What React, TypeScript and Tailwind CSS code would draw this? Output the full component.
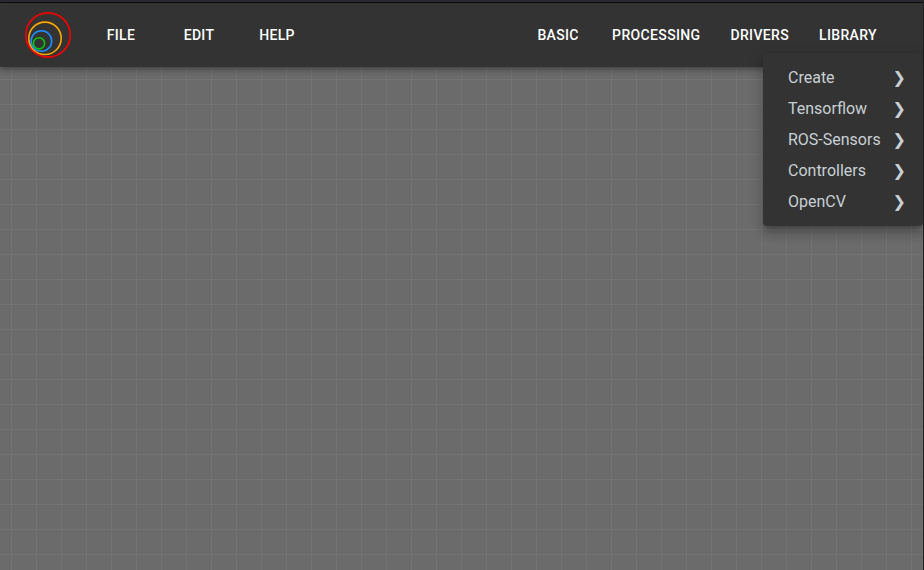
import React from "react";

const fileMenus = ["File", "Edit", "Help"];
const blockMenus = ["Basic", "Processing", "Drivers", "Library"];
const libraryItems = ["Create", "Tensorflow", "ROS-Sensors", "Controllers", "OpenCV"];

function MenuButton({ label }: { label: string }) {
  return (
    <button
      type="button"
      className="min-w-16 px-2 py-1.5 text-center text-sm font-medium uppercase leading-6 tracking-wide text-white"
    >
      {label}
    </button>
  );
}

function Logo() {
  return (
    <svg className="h-12 w-12" viewBox="0 0 48 48" fill="none" role="img" aria-label="Logo">
      <circle cx="24" cy="24" r="22.2" stroke="#f50000" strokeWidth="1.7" />
      <circle cx="21" cy="27.3" r="16.2" stroke="#ffa500" strokeWidth="1.6" />
      <circle cx="17.4" cy="30" r="10.3" stroke="#1e90ff" strokeWidth="1.6" />
      <circle cx="15" cy="32.3" r="5.6" stroke="#0bc40b" strokeWidth="1.6" />
    </svg>
  );
}

function LibraryMenu() {
  return (
    <ul className="absolute right-0 top-[50px] w-40 rounded bg-[#333333] py-[9px] pl-[25px] pr-[17px] shadow-[0_5px_5px_-3px_rgba(0,0,0,0.2),0_8px_10px_1px_rgba(0,0,0,0.14),0_3px_14px_2px_rgba(0,0,0,0.12)]">
      {libraryItems.map((item) => (
        <li key={item}>
          <button
            type="button"
            className="flex h-[31px] w-full items-center justify-between whitespace-nowrap text-base text-[#c8d0d4]"
          >
            <span>{item}</span>
            <span aria-hidden="true">❯</span>
          </button>
        </li>
      ))}
    </ul>
  );
}

export default function App() {
  return (
    <div className="flex min-h-screen flex-col border-r border-[#232323] bg-[#6b6b6b] font-[Roboto,'DejaVu_Sans',sans-serif]">
      <div className="h-[3px] border-b border-[#0c0c0d] bg-[#2b2b33]" />
      <header className="relative z-10 flex h-16 items-center justify-between bg-[#333333] pl-6 pr-[38px] shadow-[0_2px_4px_-1px_rgba(0,0,0,0.2),0_4px_5px_0_rgba(0,0,0,0.14),0_1px_10px_0_rgba(0,0,0,0.12)]">
        <div className="flex items-center gap-[17px]">
          <Logo />
          <nav aria-label="Application" className="flex gap-[14px]">
            {fileMenus.map((label) => (
              <MenuButton key={label} label={label} />
            ))}
          </nav>
        </div>
        <nav aria-label="Blocks" className="flex gap-[14px]">
          {blockMenus.map((label) => (
            <MenuButton key={label} label={label} />
          ))}
        </nav>
        <LibraryMenu />
      </header>
      <main className="flex-1 bg-[linear-gradient(to_right,#737373_1px,transparent_1px),linear-gradient(to_bottom,#737373_1px,transparent_1px)] bg-[length:25px_25px] bg-[position:11px_12px]" />
    </div>
  );
}
